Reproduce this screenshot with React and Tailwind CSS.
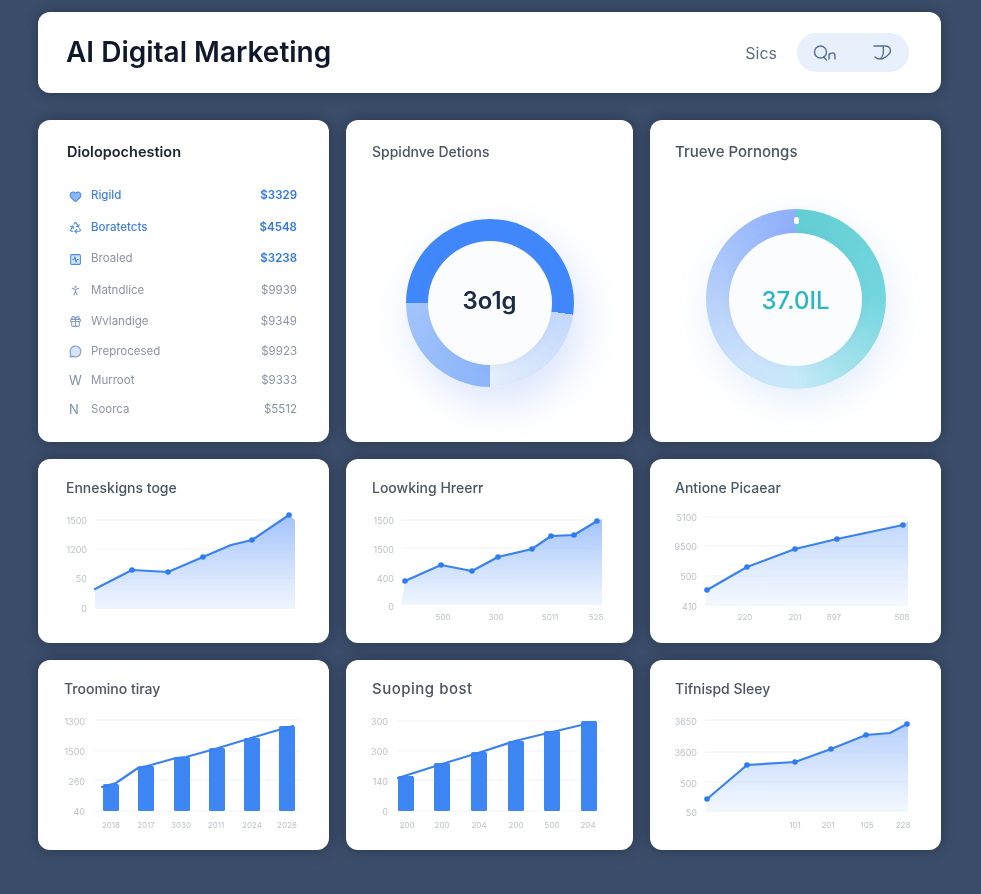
import React from 'react'
import { Heart, Recycle, SquareActivity, PersonStanding, Gift, MessageCircle } from 'lucide-react'

const rows = [
  { Icon: Heart, name: 'Rigild', value: '$3329', h: 'h-8', tone: 'blue', iconClass: 'fill-[#8fb6f2]' },
  { Icon: Recycle, name: 'Boratetcts', value: '$4548', h: 'h-[31px]', tone: 'blue' },
  { Icon: SquareActivity, name: 'Broaled', value: '$3238', h: 'h-8', tone: 'mid', iconClass: 'fill-[#d5e4fa]' },
  { Icon: PersonStanding, name: 'Matndlice', value: '$9939', h: 'h-[31px]', tone: 'gray' },
  { Icon: Gift, name: 'Wvlandige', value: '$9349', h: 'h-[31px]', tone: 'gray' },
  { Icon: MessageCircle, name: 'Preprocesed', value: '$9923', h: 'h-[29px]', tone: 'gray', iconClass: 'fill-[#d5e4fa]' },
  { Icon: null, glyph: 'W', name: 'Murroot', value: '$9333', h: 'h-[29px]', tone: 'gray' },
  { Icon: null, glyph: 'N', name: 'Soorca', value: '$5512', h: 'h-[29px]', tone: 'gray' },
]

const charts = [
  {
    title: 'Enneskigns toge', height: 'h-[184px]', left: 'pl-7', gid: 'a', fade: 0.55,
    line: [[57, 130], [94, 111], [130, 113], [165, 98], [193, 86], [214, 81], [251, 56]],
    dots: [1, 2, 3, 5, 6],
    area: { left: 57, right: 257, bottom: 150, top: 61 },
    grid: { ys: [61, 90, 119], x1: 57, x2: 257 },
    yLabels: { x: 49, items: [['1500', 62], ['1200', 91], ['50', 120], ['0', 150]] },
    xLabels: [],
  },
  {
    title: 'Loowking Hreerr', height: 'h-[184px]', left: 'pl-[26px]', gid: 'b', fade: 0.55,
    line: [[59, 122], [95, 106], [126, 112], [152, 98], [186, 90], [205, 77], [228, 76], [251, 62]],
    dots: [0, 1, 2, 3, 4, 5, 6, 7],
    area: { left: 55, right: 256, bottom: 146, top: 60 },
    grid: { ys: [61, 89, 119], x1: 55, x2: 245 },
    yLabels: { x: 48, items: [['1500', 62], ['1500', 91], ['400', 120], ['0', 148]] },
    xLabels: [['500', 97], ['300', 150], ['5011', 204], ['528', 250]],
    xY: 158,
  },
  {
    title: 'Antione Picaear', height: 'h-[184px]', left: 'pl-[25px]', gid: 'c', fade: 0.32,
    line: [[57, 131], [97, 108], [145, 90], [187, 80], [253, 66]],
    dots: [0, 1, 2, 3, 4],
    area: { left: 55, right: 258, bottom: 146, top: 62 },
    grid: { ys: [58, 87, 117, 146], x1: 55, x2: 258 },
    yLabels: { x: 47, items: [['5100', 59], ['9500', 88], ['500', 118], ['410', 148]] },
    xLabels: [['220', 95], ['201', 145], ['897', 184], ['508', 252]],
    xY: 158,
  },
  {
    title: 'Troomino tiray', height: 'h-[190px]', left: 'pl-[26px]', bars: { w: 16, bottom: 151, items: [[65, 125], [100, 107], [136, 98], [171, 89], [206, 79], [241, 67]] },
    line: [[64, 127], [78, 123], [100, 108], [113, 105], [138, 98], [148, 97], [177, 89], [210, 79], [230, 73], [255, 66]],
    dots: [],
    grid: { ys: [60, 91, 120, 151], x1: 56, x2: 262 },
    yLabels: { x: 47, items: [['1300', 62], ['1500', 92], ['260', 122], ['40', 152]] },
    xLabels: [['2018', 73], ['2017', 108], ['3030', 143], ['2011', 178], ['2024', 214], ['2028', 249]],
    xY: 165,
  },
  {
    title: 'Suoping bost', titleClass: 'text-[15px] tracking-[0.5px]', height: 'h-[190px]', left: 'pl-[26px]', bars: { w: 16, bottom: 151, items: [[52, 117], [88, 104], [125, 93], [162, 82], [198, 72], [235, 62]] },
    line: [[52, 118], [96, 104], [132, 93], [169, 81], [206, 72], [244, 63]],
    dots: [],
    grid: { ys: [61, 91, 120, 151], x1: 51, x2: 256 },
    yLabels: { x: 42, items: [['300', 62], ['300', 92], ['140', 122], ['0', 152]] },
    xLabels: [['200', 61], ['200', 96], ['204', 133], ['200', 170], ['500', 206], ['204', 242]],
    xY: 165,
  },
  {
    title: 'Tifnispd Sleey', height: 'h-[190px]', left: 'pl-[25px]', gid: 'f', fade: 0.4,
    line: [[57, 139], [97, 105], [145, 102], [181, 89], [216, 75], [240, 73], [257, 64]],
    dots: [0, 1, 2, 3, 4, 6],
    area: { left: 57, right: 258, bottom: 151, top: 64 },
    grid: { ys: [60, 92, 122, 151], x1: 55, x2: 258 },
    yLabels: { x: 47, items: [['3650', 62], ['3600', 93], ['500', 124], ['50', 153]] },
    xLabels: [['101', 145], ['201', 178], ['105', 217], ['228', 253]],
    xY: 165,
  },
]

// viewBox starts below the title block so the numbers stay card-local
function Chart({ c, w, h }) {
  const pts = c.line.map(p => p.join(',')).join(' ')
  const areaPts = c.area
    ? `${c.area.left},${c.area.bottom} ${pts} ${c.area.right},${c.area.top} ${c.area.right},${c.area.bottom}`
    : ''
  return (
    <svg viewBox={`0 44 ${w} ${h - 44}`} width={w} height={h - 44} className="block">
      {c.gid && (
        <defs>
          <linearGradient id={c.gid} x1="0" y1="0" x2="0" y2="1">
            <stop offset="0%" stopColor="#84aff9" stopOpacity={c.fade + 0.2} />
            <stop offset="100%" stopColor="#e6f0fe" stopOpacity={c.fade + 0.1} />
          </linearGradient>
        </defs>
      )}
      {c.grid.ys.map(y => (
        <line key={y} x1={c.grid.x1} x2={c.grid.x2} y1={y} y2={y} stroke="#eef2f8" strokeWidth="1" />
      ))}
      {c.area && <polygon points={areaPts} fill={`url(#${c.gid})`} />}
      {c.bars && c.bars.items.map(([x, y]) => (
        <rect key={x} x={x} y={y - 1} width={c.bars.w} height={c.bars.bottom - y + 1} rx="1.5" fill="#3f86f5" />
      ))}
      <polyline points={pts} fill="none" stroke="#3b82f0" strokeWidth="2.2" strokeLinejoin="round" strokeLinecap="round" />
      {c.dots.map(i => (
        <circle key={i} cx={c.line[i][0]} cy={c.line[i][1]} r="2.8" fill="#2f7cf0" />
      ))}
      {c.yLabels.items.map(([t, y], i) => (
        <text key={i} x={c.yLabels.x} y={y + 3} textAnchor="end" fontSize="9" fill="#bcc2cb">{t}</text>
      ))}
      {c.xLabels.map(([t, x], i) => (
        <text key={i} x={x} y={c.xY + 3} textAnchor="middle" fontSize="8" fill="#bcc2cb">{t}</text>
      ))}
    </svg>
  )
}

function ChartCard({ c, w }) {
  const h = c.height === 'h-[184px]' ? 184 : 190
  return (
    <div className={`${c.height} bg-white rounded-xl overflow-hidden shadow-[0_0_14px_rgba(20,30,50,0.45)]`}>
      <div className={`h-11 pt-[19px] ${c.left} ${c.titleClass || 'text-sm'} leading-5 font-medium text-[#4b5563]`}>{c.title}</div>
      <Chart c={c} w={w} h={h} />
    </div>
  )
}

function ListRow({ r }) {
  const nameColor = r.tone === 'blue' ? 'text-[#3f7fe8] font-medium' : 'text-[#8a94a6]'
  const valueColor = r.tone === 'gray' ? 'text-[#8a94a6]' : 'text-[#2f78ec] font-semibold'
  const iconColor = r.tone === 'gray' ? 'text-[#7f9cc6]' : 'text-[#4a8bec]'
  return (
    <li className={`${r.h} flex items-center text-[11.5px]`}>
      <span className={`w-6 pl-[2px] flex ${iconColor}`}>
        {r.Icon
          ? <r.Icon size={13} strokeWidth={2} className={r.iconClass} />
          : <span className="text-[13px] leading-none text-[#8090a8]">{r.glyph}</span>}
      </span>
      <span className={`flex-1 ${nameColor}`}>{r.name}</span>
      <span className={valueColor}>{r.value}</span>
    </li>
  )
}

export default function App() {
  return (
    <div className='font-["Inter","Liberation_Sans",sans-serif] min-h-screen bg-[#3b4d6a] pt-3 pb-11 pl-[38px] pr-[40px] blur-[0.35px]'>
      <header className="h-[81px] bg-white rounded-xl flex items-center pl-7 pr-8 shadow-[0_0_14px_rgba(20,30,50,0.45)]">
        <h1 className="flex-1 pb-0.5 text-[28px] font-semibold text-[#10182b]">AI Digital Marketing</h1>
        <span className="text-base text-[#5f6b7c] mr-5">Sics</span>
        <div className="w-[112px] h-[39px] rounded-full bg-[#e8f0fb] flex items-center justify-between px-4 text-[#56708f]">
          <svg width="26" height="18" viewBox="0 0 26 18" fill="none" stroke="currentColor" strokeWidth="1.4" strokeLinecap="round">
            <circle cx="7.5" cy="8" r="6" />
            <path d="M10.5 13l3 3M16 15v-5M16 11c2-3 6-3 6 1v3" />
          </svg>
          <svg width="20" height="18" viewBox="0 0 20 18" fill="none" stroke="currentColor" strokeWidth="1.4" strokeLinecap="round">
            <path d="M1 2h11c6 0 7 6 3 9-2 2-5 4-8 4M10 2c1 5 1 10-3 13-2 0-4-1-5-2" />
          </svg>
        </div>
      </header>

      <main className="mt-[27px] grid grid-cols-[291px_287px_291px] gap-[17px]">
        <section className="h-[322px] bg-white rounded-xl pt-[22px] pl-[29px] pr-8 shadow-[0_0_14px_rgba(20,30,50,0.45)]">
          <h2 className="text-[14.5px] leading-5 font-semibold text-[#1b2230]">Diolopochestion</h2>
          <ul className="mt-[18px]">
            {rows.map(r => <ListRow key={r.name} r={r} />)}
          </ul>
        </section>

        <section className="h-[322px] bg-white rounded-xl pt-[22px] shadow-[0_0_14px_rgba(20,30,50,0.45)]">
          <h2 className="pl-[26px] text-sm leading-5 font-medium text-[#4b5563]">Sppidnve Detions</h2>
          <div className="mt-[57px] mx-auto w-[168px] h-[168px] rounded-full flex items-center justify-center bg-[conic-gradient(#3f87fb_0deg_98deg,#c3d8fc_98deg,#e4eefc_180deg,#8bb5fa_180deg,#a3c4fb_270deg,#3f87fb_270deg)] shadow-[8px_16px_40px_rgba(70,120,240,0.2)]">
            <div className="w-[124px] h-[124px] pb-1 rounded-full bg-[#fafcfe] shadow-[0_0_10px_rgba(120,150,220,0.12)] flex items-center justify-center text-2xl font-semibold text-[#1c2a44]">3o1g</div>
          </div>
        </section>

        <section className="h-[322px] bg-white rounded-xl pt-[22px] shadow-[0_0_14px_rgba(20,30,50,0.45)]">
          <h2 className="pl-[25px] text-[15px] leading-5 font-medium text-[#4b5563]">Trueve Pornongs</h2>
          <div className="relative mt-[47px] mx-auto w-[180px] h-[180px] rounded-full flex items-center justify-center bg-[conic-gradient(#63ced2_0deg,#74d6df_90deg,#a9e3ee_150deg,#c7e9f9_180deg,#cbe2fb_220deg,#aec9fb_290deg,#8eaefa_360deg)] shadow-[4px_12px_36px_rgba(90,150,235,0.16)]">
            <span className="absolute top-2 left-[88px] w-[5px] h-[7px] rounded-full bg-white" />
            <div className="w-[133px] h-[133px] pt-1 rounded-full bg-[#fafcfe] shadow-[0_0_10px_rgba(120,150,220,0.12)] flex items-center justify-center text-2xl font-medium text-[#2bb6c4]">37.0IL</div>
          </div>
        </section>

        <ChartCard c={charts[0]} w={291} />
        <ChartCard c={charts[1]} w={287} />
        <ChartCard c={charts[2]} w={291} />
        <ChartCard c={charts[3]} w={291} />
        <ChartCard c={charts[4]} w={287} />
        <ChartCard c={charts[5]} w={291} />
      </main>
    </div>
  )
}
